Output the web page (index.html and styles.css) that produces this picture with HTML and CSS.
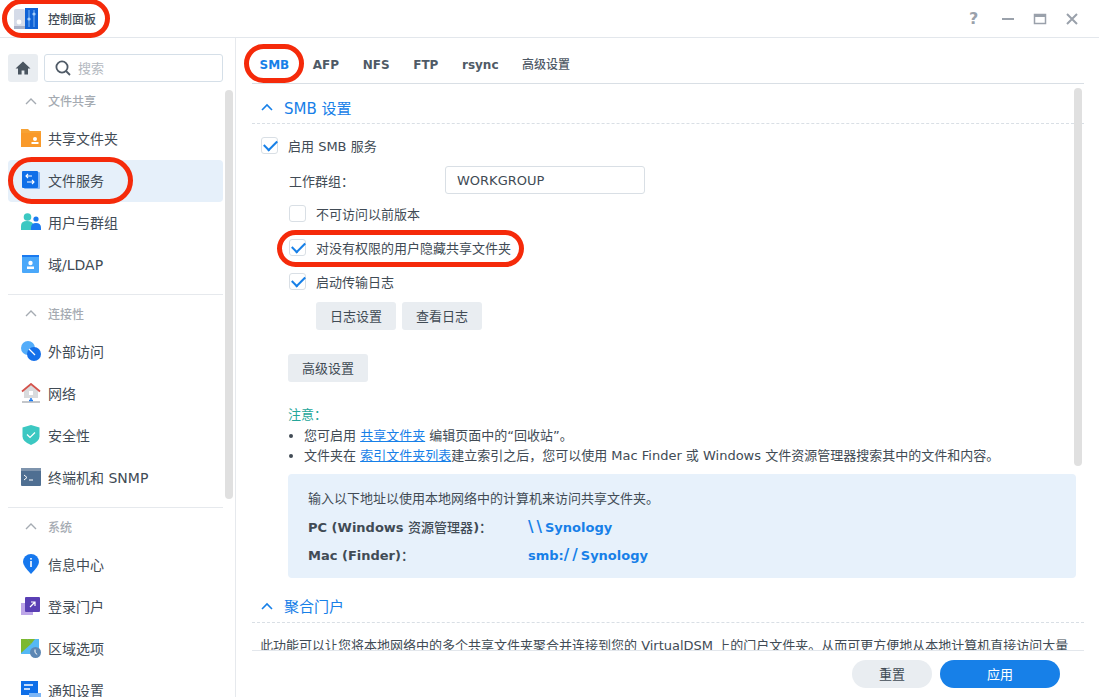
FILE: index.html
```html
<!DOCTYPE html>
<html lang="zh-CN">
<head>
    <meta charset="UTF-8">
    <title>控制面板</title>
    <link rel="stylesheet" href="styles.css">
</head>
<body>
    <div class="window">
        <header class="titlebar">
            <div class="app-title">
                <svg class="app-icon" viewBox="0 0 24 22">
                    <rect x="0" y="1" width="11" height="20" rx="1.5" fill="#d5dbe8"/>
                    <rect x="0" y="18" width="11" height="3" fill="#a9b2c8"/>
                    <circle cx="5" cy="14" r="2.4" fill="#fff"/>
                    <rect x="11" y="0" width="13" height="21" fill="#0f62d6"/>
                    <path d="M15 2v17M20 2v17" stroke="#7fb4f2" stroke-width="1"/>
                    <circle cx="15" cy="11" r="1.6" fill="#a8d0fa"/>
                    <circle cx="20" cy="6" r="1.6" fill="#a8d0fa"/>
                </svg>
                <span>控制面板</span>
            </div>
            <div class="win-buttons">
                <span class="win-help">?</span>
                <svg viewBox="0 0 14 14"><path d="M1 7h12" stroke="#9aa1ab" stroke-width="2"/></svg>
                <svg viewBox="0 0 14 14"><rect x="1.5" y="2.5" width="11" height="9" fill="none" stroke="#9aa1ab" stroke-width="1.5"/><rect x="1" y="2" width="12" height="3" fill="#9aa1ab"/></svg>
                <svg viewBox="0 0 14 14"><path d="M2 2l10 10M12 2L2 12" stroke="#9aa1ab" stroke-width="2"/></svg>
            </div>
        </header>

        <div class="body">
            <aside class="sidebar">
                <div class="search-row">
                    <button class="home-btn">
                        <svg viewBox="0 0 16 16"><path d="M8 1.5L0.5 8.5H3v6h3.6v-4h2.8v4H13v-6h2.5z" fill="#4a5560"/></svg>
                    </button>
                    <div class="search-box">
                        <svg viewBox="0 0 16 16"><circle cx="7" cy="7" r="5.6" fill="none" stroke="#4f5a66" stroke-width="1.8"/><path d="M11 11l4 4" stroke="#4f5a66" stroke-width="1.8"/></svg>
                        <span>搜索</span>
                    </div>
                </div>

                <div class="nav">
                    <div class="group-title first"><svg viewBox="0 0 12 8"><path d="M1 7l5-5 5 5" fill="none" stroke="#a5abb2" stroke-width="1.4"/></svg>文件共享</div>
                    <div class="nav-item">
                        <svg viewBox="0 0 20 20"><path d="M0 1h7l2 2h11v16H0z" fill="#f7a234"/><path d="M0 5h20v14H0z" fill="#f99a2a"/><circle cx="14" cy="11" r="2" fill="#fff"/><rect x="10.5" y="14" width="7" height="2" fill="#fff"/></svg>
                        共享文件夹
                    </div>
                    <div class="nav-item active">
                        <svg viewBox="0 0 20 20"><rect x="3" y="2" width="16" height="17" rx="1" fill="#86b8f6"/><rect x="1" y="1" width="16" height="17" rx="1" fill="#0f6fe8"/><path d="M11 6H5M7 4L5 6l2 2M6 12h7M11 10l2 2-2 2" fill="none" stroke="#fff" stroke-width="1.1"/></svg>
                        文件服务
                    </div>
                    <div class="nav-item">
                        <svg viewBox="0 0 20 20"><circle cx="6.5" cy="5" r="3.8" fill="#3cc8c2"/><path d="M0 18v-4q0-5 6-5t7 5v4z" fill="#3cc8c2"/><circle cx="15" cy="7" r="2.6" fill="#1a7af0"/><path d="M10 18v-2q0-5 5-5t5 5v2z" fill="#1a7af0"/></svg>
                        用户与群组
                    </div>
                    <div class="nav-item">
                        <svg viewBox="0 0 20 20"><rect x="1" y="1" width="17" height="18" rx="1" fill="#4aa8fa"/><rect x="1" y="1" width="17" height="2" fill="#1a7af0"/><circle cx="9.5" cy="9" r="2.2" fill="#fff"/><rect x="6" y="12.5" width="7" height="2.5" fill="#fff"/></svg>
                        域/LDAP
                    </div>

                    <div class="group-title"><svg viewBox="0 0 12 8"><path d="M1 7l5-5 5 5" fill="none" stroke="#a5abb2" stroke-width="1.4"/></svg>连接性</div>
                    <div class="nav-item">
                        <svg viewBox="0 0 20 20"><circle cx="7" cy="7" r="7" fill="#54adfa"/><circle cx="13" cy="13" r="7" fill="#1570ea"/><path d="M8 8l6 6" stroke="#fff" stroke-width="1.2"/></svg>
                        外部访问
                    </div>
                    <div class="nav-item">
                        <svg viewBox="0 0 20 20"><path d="M3 8v7h14V8L10 2z" fill="#d9dbdd"/><path d="M1 8.5L10 1l9 7.5" fill="none" stroke="#d3534c" stroke-width="1.8"/><rect x="8" y="8" width="4" height="4" fill="#fff"/><rect x="1" y="18" width="18" height="2" fill="#c3c6ca"/><path d="M10 15v3M8 17.5h4" stroke="#1a7af0" stroke-width="1.5"/></svg>
                        网络
                    </div>
                    <div class="nav-item">
                        <svg viewBox="0 0 20 20"><path d="M10 0l8.5 2.5v9q0 5-8.5 8.5-8.5-3.5-8.5-8.5v-9z" fill="#3cc8c2"/><path d="M6 9.5l3 3 5-5" fill="none" stroke="#fff" stroke-width="1.2"/></svg>
                        安全性
                    </div>
                    <div class="nav-item">
                        <svg viewBox="0 0 20 20"><rect x="0" y="1" width="20" height="18" rx="1" fill="#4f6f92"/><rect x="0" y="1" width="20" height="3" fill="#7e94ad"/><path d="M3 8l3 2.5-3 2.5M8 13h4" fill="none" stroke="#fff" stroke-width="1"/></svg>
                        终端机和 SNMP
                    </div>

                    <div class="group-title"><svg viewBox="0 0 12 8"><path d="M1 7l5-5 5 5" fill="none" stroke="#a5abb2" stroke-width="1.4"/></svg>系统</div>
                    <div class="nav-item">
                        <svg viewBox="0 0 20 20"><path d="M10 0a8 8 0 0 1 8 8q0 4-8 12Q2 12 2 8a8 8 0 0 1 8-8z" fill="#1678ee"/><rect x="9.2" y="7" width="1.6" height="6" fill="#fff"/><rect x="9.2" y="4" width="1.6" height="1.6" fill="#fff"/></svg>
                        信息中心
                    </div>
                    <div class="nav-item">
                        <svg viewBox="0 0 20 20"><rect x="0" y="7" width="12" height="12" fill="#bda6e8"/><rect x="4" y="1" width="15" height="15" rx="1" fill="#5a3fb4"/><path d="M9 11l5-5M10 6h4v4" fill="none" stroke="#fff" stroke-width="1.2"/></svg>
                        登录门户
                    </div>
                    <div class="nav-item">
                        <svg viewBox="0 0 20 20"><rect x="0" y="1" width="18" height="15" fill="#55b8f5"/><path d="M0 1h6l4 5L0 15z" fill="#7cb82f"/><path d="M6 1h8L10 6z" fill="#7cb82f"/><circle cx="14.5" cy="14.5" r="5.5" fill="#5d87b4"/><path d="M14 11.5v3l2.2 2" fill="none" stroke="#fff" stroke-width="1"/></svg>
                        区域选项
                    </div>
                    <div class="nav-item">
                        <svg viewBox="0 0 20 20"><rect x="0" y="1" width="17" height="14" fill="#0f6fe8"/><path d="M3 5h9M3 9h6" stroke="#fff" stroke-width="1.3"/><rect x="8" y="13" width="12" height="7" fill="#7db6f6"/></svg>
                        通知设置
                    </div>
                </div>
                <div class="scroll-thumb nav-thumb"></div>
            </aside>

            <main class="main">
                <nav class="tabs">
                    <span class="tab current">SMB</span>
                    <span class="tab">AFP</span>
                    <span class="tab">NFS</span>
                    <span class="tab">FTP</span>
                    <span class="tab">rsync</span>
                    <span class="tab">高级设置</span>
                </nav>

                <div class="content">
                    <h2 class="section-title"><svg viewBox="0 0 12 8"><path d="M1 7l5-5 5 5" fill="none" stroke="#1780e8" stroke-width="1.6"/></svg>SMB 设置</h2>

                    <div class="row"><span class="check on"></span>启用 SMB 服务</div>
                    <div class="row indent field-row">
                        <label class="field-label">工作群组&#65306;</label>
                        <div class="text-input">WORKGROUP</div>
                    </div>
                    <div class="row indent"><span class="check"></span>不可访问以前版本</div>
                    <div class="row indent"><span class="check on"></span>对没有权限的用户隐藏共享文件夹</div>
                    <div class="row indent"><span class="check on"></span>启动传输日志</div>
                    <div class="btn-row log-btns">
                        <span class="btn">日志设置</span>
                        <span class="btn">查看日志</span>
                    </div>
                    <div class="btn-row adv-btn">
                        <span class="btn">高级设置</span>
                    </div>

                    <div class="note">
                        <div class="note-title">注意&#65306;</div>
                        <ul>
                            <li>您可启用 <a>共享文件夹</a> 编辑页面中的“回收站”。</li>
                            <li>文件夹在 <a>索引文件夹列表</a>建立索引之后&#65292;您可以使用 Mac Finder 或 Windows 文件资源管理器搜索其中的文件和内容。</li>
                        </ul>
                    </div>

                    <div class="info-box">
                        <p>输入以下地址以使用本地网络中的计算机来访问共享文件夹。</p>
                        <div class="addr"><b>PC (Windows <span class="cjk">资源管理器</span>)<span class="cjk">&#65306;</span></b><strong><span class="slashes">\\</span>Synology</strong></div>
                        <div class="addr"><b>Mac (Finder)<span class="cjk">&#65306;</span></b><strong>smb:<span class="slashes">//</span>Synology</strong></div>
                    </div>

                    <h2 class="section-title portal"><svg viewBox="0 0 12 8"><path d="M1 7l5-5 5 5" fill="none" stroke="#1780e8" stroke-width="1.6"/></svg>聚合门户</h2>
                    <p class="portal-text">此功能可以让您将本地网络中的多个共享文件夹聚合并连接到您的 VirtualDSM 上的门户文件夹。从而可更方便地从本地计算机直接访问大量</p>
                    <div class="scroll-thumb content-thumb"></div>
                </div>

                <footer class="footer">
                    <span class="foot-btn">重置</span>
                    <span class="foot-btn primary">应用</span>
                </footer>
            </main>
        </div>

        <!-- red annotation rings -->
        <div class="ring ring-title"></div>
        <div class="ring ring-service"></div>
        <div class="ring ring-tab"></div>
        <div class="ring ring-hide"></div>
    </div>
</body>
</html>
```

FILE: styles.css
```css
* {
    box-sizing: border-box;
}

html, body {
    margin: 0;
    height: 100%;
    overflow: hidden;
}

body {
    background: #fff;
    color: #414b55;
    font-family: "DejaVu Sans", "Noto Sans CJK SC", sans-serif;
    font-size: 13px;
}

.window {
    position: relative;
    height: 697px;
    display: flex;
    flex-direction: column;
}

/* title bar */
.titlebar {
    height: 38px;
    flex: none;
    display: flex;
    align-items: center;
    justify-content: space-between;
    border-bottom: 1px solid #e3e7ec;
}

.app-title {
    display: flex;
    align-items: center;
    padding-left: 14px;
    font-size: 12px;
    font-weight: 500;
}

.app-icon {
    width: 24px;
    height: 22px;
    margin-right: 10px;
}

.win-buttons {
    display: flex;
    align-items: center;
    padding-right: 20px;
    gap: 18px;
}

.win-buttons svg {
    width: 14px;
    height: 14px;
}

.win-help {
    color: #9aa1ab;
    font-size: 16px;
    font-weight: 700;
    width: 12px;
    margin-right: 2px;
}

.body {
    flex: 1;
    display: flex;
    min-height: 0;
}

/* sidebar */
.sidebar {
    position: relative;
    width: 236px;
    flex: none;
    border-right: 1px solid #e6e9ed;
    overflow: hidden;
}

.search-row {
    display: flex;
    gap: 6px;
    padding: 16px 12px 0 8px;
}

.home-btn {
    width: 30px;
    height: 28px;
    border: 0;
    padding: 0;
    border-radius: 3px;
    background: #e9edf1;
    display: flex;
    align-items: center;
    justify-content: center;
}

.home-btn svg {
    width: 16px;
    height: 16px;
}

.search-box {
    width: 179px;
    height: 28px;
    border: 1px solid #d5dfe8;
    border-radius: 3px;
    display: flex;
    align-items: center;
    padding-left: 10px;
    gap: 7px;
    color: #b4b9bf;
    font-size: 13px;
}

.search-box svg {
    width: 16px;
    height: 16px;
}

.search-box span {
    margin-bottom: 2px;
}

.nav {
    padding: 0 12px 0 8px;
}

.group-title {
    height: 37px;
    margin-top: 8px;
    border-top: 1px solid #e6e9ed;
    display: flex;
    align-items: center;
    color: #a5abb2;
    font-size: 12px;
    font-weight: 500;
    padding-left: 17px;
}

.group-title.first {
    height: 36px;
    margin-top: 0;
    border-top: 0;
    padding-top: 1px;
}

.group-title svg {
    width: 12px;
    height: 8px;
    margin-right: 11px;
}

.nav-item {
    height: 42px;
    display: flex;
    align-items: center;
    padding: 0 0 2px 13px;
    font-size: 14px;
    border-radius: 4px;
}

.nav-item svg {
    width: 20px;
    height: 20px;
    margin-right: 7px;
    flex: none;
}

.nav-item.active {
    background: #e6f0fa;
}

.scroll-thumb {
    position: absolute;
    width: 8px;
    background: #e0e0e0;
    border-radius: 4px;
}

.nav-thumb {
    left: 225px;
    top: 52px;
    height: 409px;
}

/* main panel */
.main {
    flex: 1;
    min-width: 0;
    display: flex;
    flex-direction: column;
    padding: 0 15px 0 16px;
}

.tabs {
    height: 46px;
    flex: none;
    display: flex;
    align-items: center;
    border-bottom: 1px solid #d9dfe5;
    padding: 9px 0 0 7.5px;
    gap: 23.6px;
    font-size: 12px;
    font-weight: 700;
    color: #4f5a66;
}

.tab.current {
    color: #1780e8;
}

.tab:last-child {
    font-weight: 500;
    margin-bottom: 4px;
}

.content {
    position: relative;
    height: 567px;
    flex: none;
    overflow: hidden;
    border-bottom: 1px solid #e3e7ec;
}

.section-title {
    margin: 0;
    height: 40px;
    display: flex;
    align-items: center;
    border-bottom: 1px dashed #d9dfe5;
    color: #1780e8;
    font-size: 15px;
    font-weight: 400;
    padding: 7px 0 0 9px;
}

.section-title svg {
    width: 12px;
    height: 8px;
    margin-right: 11px;
}

.row {
    height: 34px;
    display: flex;
    align-items: center;
    padding: 0 0 2px 9px;
}

.section-title + .row {
    margin-top: 5px;
}

.row.indent {
    padding-left: 37px;
}

.row.field-row {
    padding-bottom: 0;
}

.field-label {
    width: 156px;
}

.text-input {
    width: 200px;
    height: 28px;
    border: 1px solid #d9dfe5;
    border-radius: 3px;
    display: flex;
    align-items: center;
    padding-left: 11px;
}

.check {
    width: 17px;
    height: 17px;
    margin-right: 10px;
    border: 1px solid #d9dfe5;
    border-radius: 3px;
    position: relative;
    flex: none;
}

.check.on::after {
    content: "";
    position: absolute;
    left: 2px;
    top: 0;
    width: 11px;
    height: 6px;
    margin-top: 2px;
    border-left: 2.5px solid #1780e8;
    border-bottom: 2.5px solid #1780e8;
    transform: rotate(-45deg);
}

.btn-row {
    display: flex;
    gap: 6px;
}

.log-btns {
    padding: 3px 0 0 64px;
}

.adv-btn {
    padding: 24px 0 0 36px;
}

.btn {
    width: 80px;
    height: 28px;
    padding-bottom: 2px;
    background: #e9edf1;
    border-radius: 3px;
    display: flex;
    align-items: center;
    justify-content: center;
}

.note {
    margin: 23px 0 0 36px;
    line-height: 20.5px;
}

.note-title {
    color: #26a69a;
}

.note ul {
    margin: 0;
    padding: 0 0 0 16px;
}

.note a {
    color: #1780e8;
    text-decoration: underline;
}

.info-box {
    width: 788px;
    height: 104px;
    margin: 7px 0 0 36px;
    padding: 15px 20px 0;
    background: #e7f1fb;
    border-radius: 4px;
}

.info-box p {
    margin: 0 0 4px;
    line-height: 20px;
}

.addr {
    display: flex;
    height: 28px;
    align-items: center;
}

.addr b {
    width: 220px;
    font-weight: 700;
}

.addr .cjk {
    font-weight: 500;
}

.addr strong {
    color: #1780e8;
    font-weight: 700;
}

.addr .slashes {
    font-size: 15px;
    letter-spacing: 3px;
}

.section-title.portal {
    margin-top: 8px;
    padding-top: 4px;
    height: 37px;
}

.portal-text {
    margin: 13px 0 0;
    padding-left: 8px;
    white-space: nowrap;
    line-height: 20px;
}

.content-thumb {
    left: 822px;
    top: 4px;
    height: 378px;
}

.footer {
    flex: 1;
    display: flex;
    justify-content: flex-end;
    gap: 8px;
    padding: 9px 24px 0 0;
}

.foot-btn {
    width: 80px;
    height: 28px;
    padding-bottom: 2px;
    border-radius: 14px;
    background: #e9edf1;
    display: flex;
    align-items: center;
    justify-content: center;
}

.foot-btn.primary {
    width: 120px;
    background: #1780e8;
    color: #fff;
}

/* annotation rings */
.ring {
    position: absolute;
    border: 5px solid #f52a0a;
    border-radius: 30px;
}

.ring-title {
    left: 2px;
    top: -1px;
    width: 108px;
    height: 39px;
}

.ring-service {
    left: 8px;
    top: 157px;
    width: 125px;
    height: 47px;
}

.ring-tab {
    left: 244px;
    top: 44px;
    width: 60px;
    height: 39px;
}

.ring-hide {
    left: 277px;
    top: 230px;
    width: 247px;
    height: 37px;
}
```
